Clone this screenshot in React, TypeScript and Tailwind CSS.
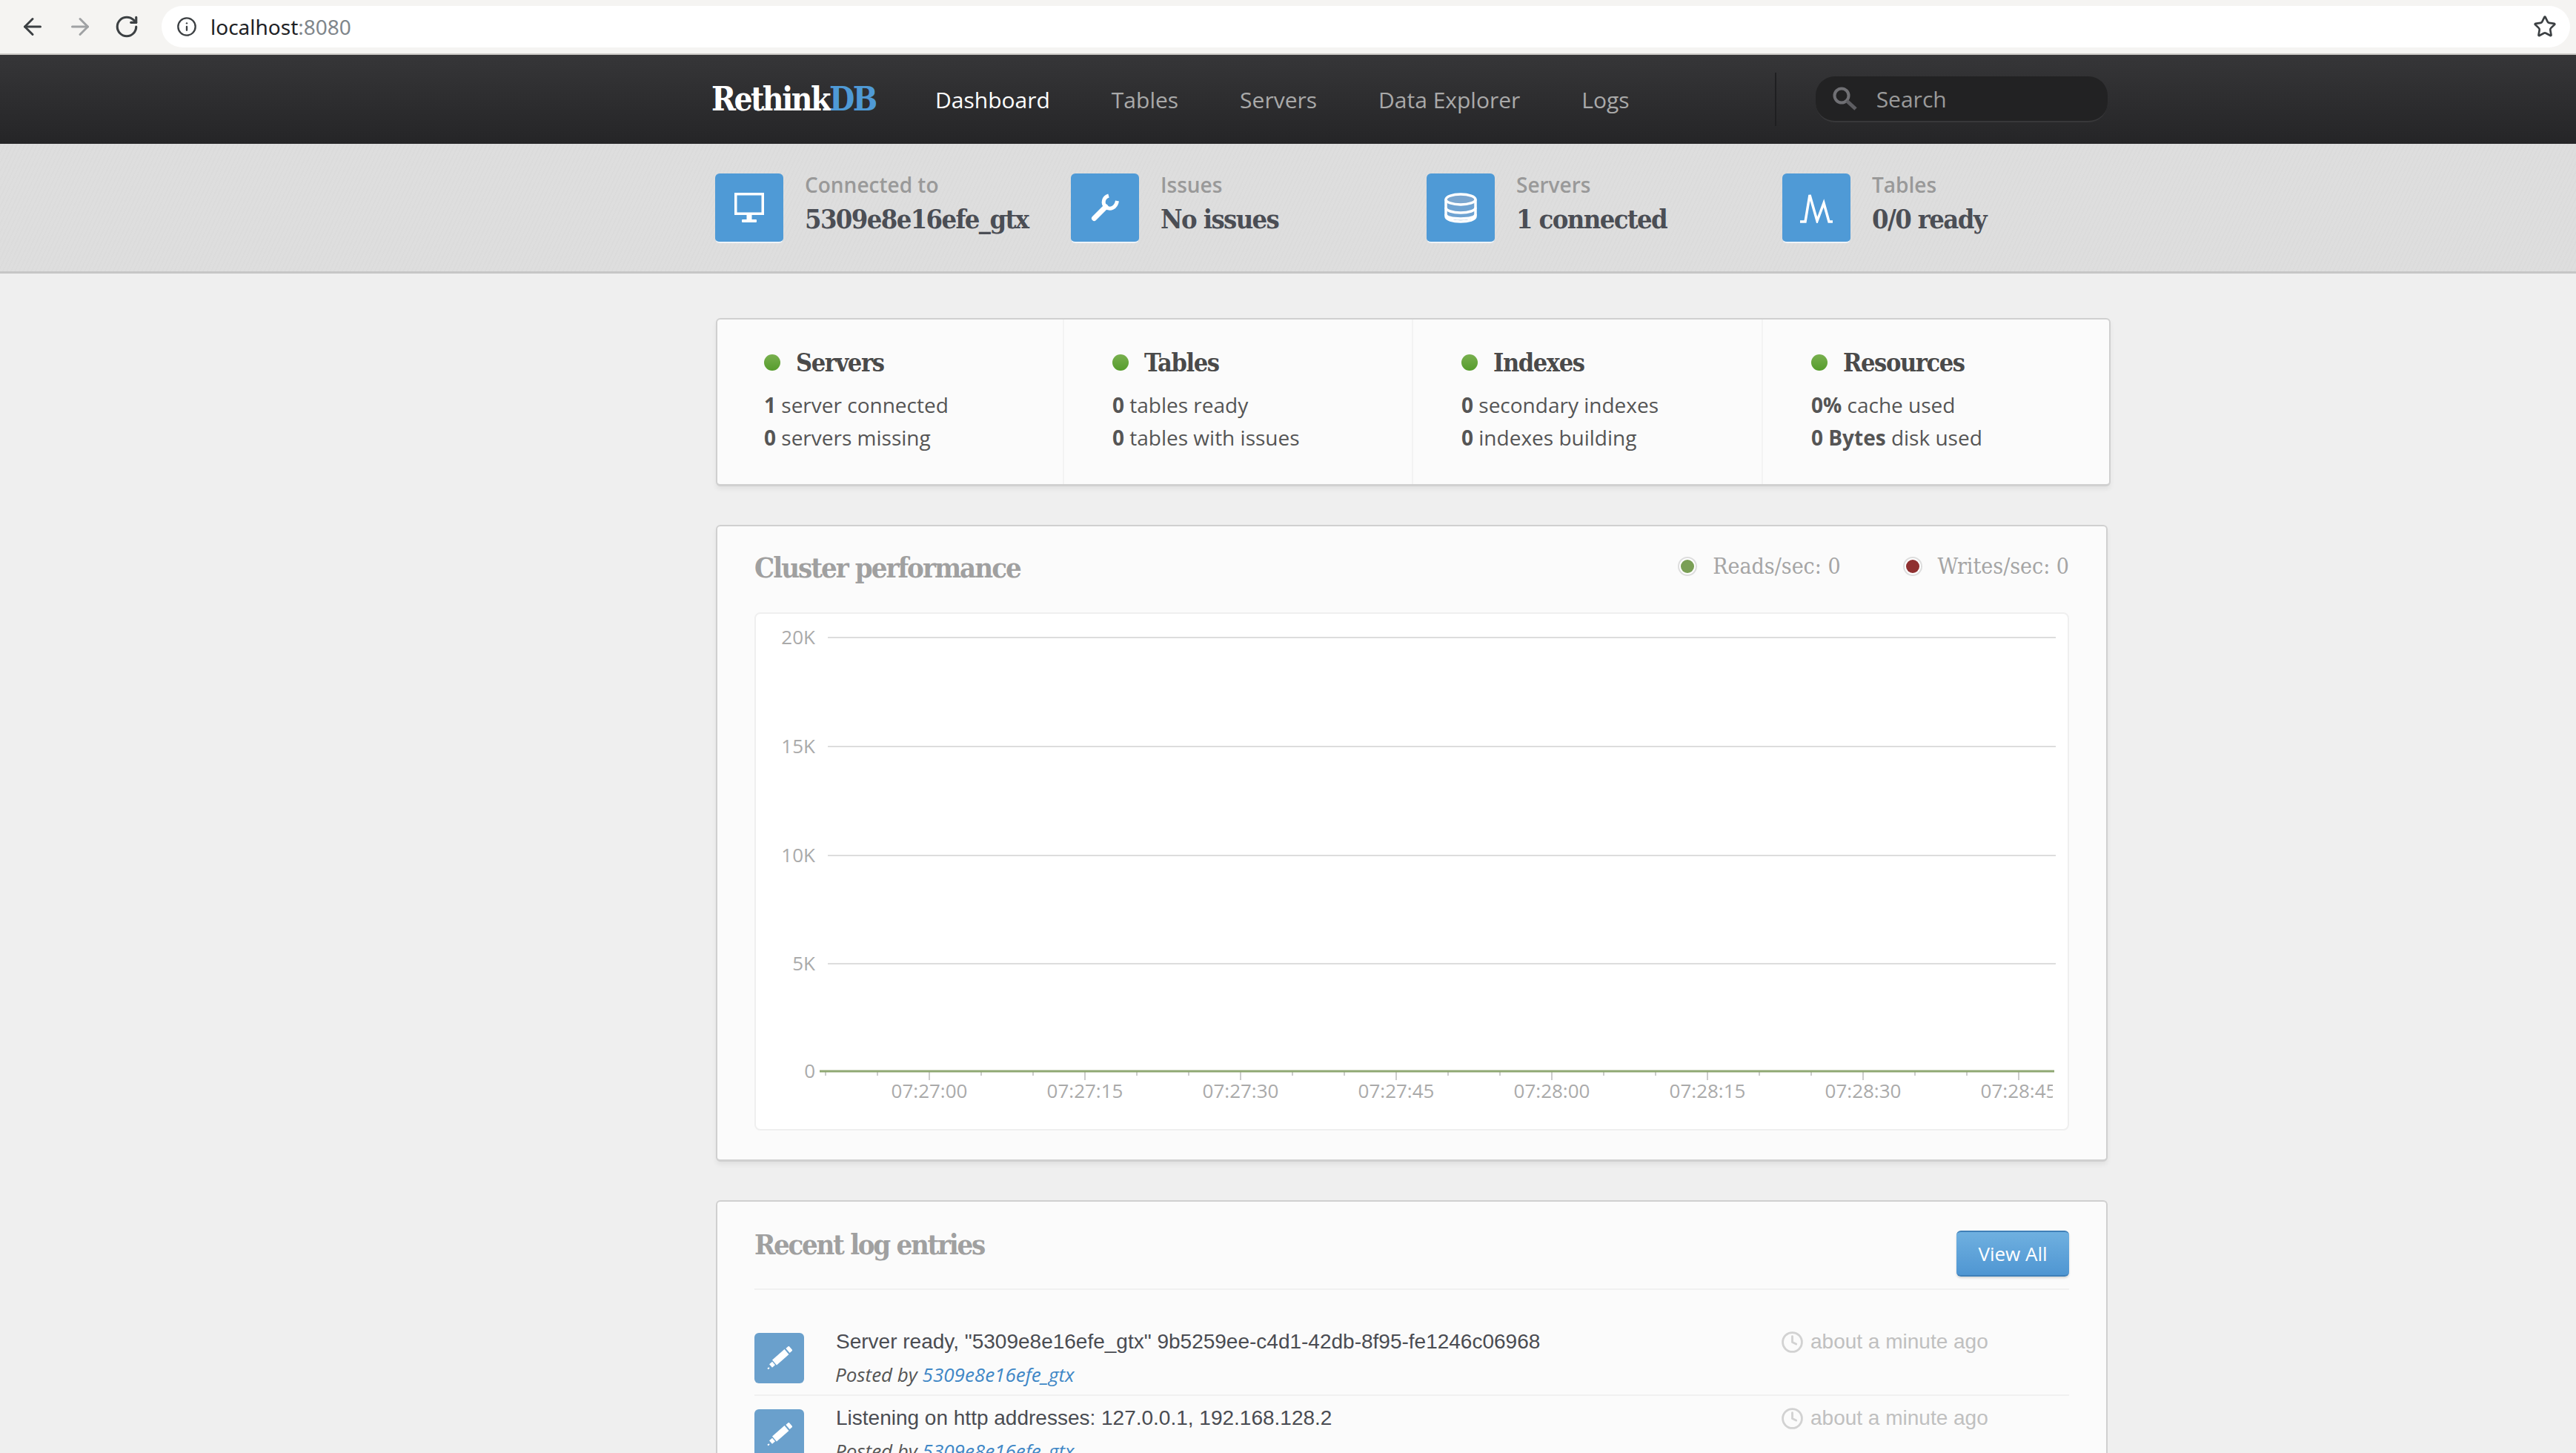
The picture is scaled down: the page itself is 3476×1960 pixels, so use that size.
import React from 'react';
import { ArrowLeft, ArrowRight, RotateCw, Info, Star, Clock } from 'lucide-react';

const sans = "[font-family:'Open_Sans',sans-serif]";
const slab = "[font-family:'DejaVu_Serif_Condensed','DejaVu_Serif',serif]";
const texture = 'bg-[repeating-linear-gradient(115deg,rgba(0,0,0,0.012)_0_2px,transparent_2px_5px)]';

function MonitorIcon() {
  return (
    <svg width="40" height="40" viewBox="0 0 40 40" fill="none">
      <rect x="1.75" y="1.75" width="36.5" height="26.5" stroke="#fff" strokeWidth="3.5" />
      <rect x="16.5" y="30" width="7" height="6" fill="#fff" />
      <rect x="10" y="36" width="20" height="4" rx="1" fill="#fff" />
    </svg>
  );
}

function WrenchIcon() {
  return (
    <svg width="38" height="38" viewBox="0 0 38 38" fill="none" stroke="#fff" strokeLinecap="round">
      <path d="M4.5 33.5L20 18" strokeWidth="7" />
      <path d="M24 3C17 5 15 13 20 18C26 23 34 19 35.5 10" strokeWidth="5" strokeLinecap="butt" />
    </svg>
  );
}

function DatabaseIcon() {
  return (
    <svg width="44" height="41" viewBox="0 0 44 41" fill="none" stroke="#fff" strokeWidth="3.5">
      <path d="M2 9V32C2 36 11 39 22 39S42 36 42 32V9" fill="#6fa3d2" />
      <path d="M2 20C2 24 11 27 22 27S42 24 42 20M2 29C2 33 11 35 22 35S42 33 42 29" />
      <ellipse cx="22" cy="9" rx="20" ry="7" fill="#7ba6cf" />
    </svg>
  );
}

function PeaksIcon() {
  return (
    <svg width="44" height="41" viewBox="0 0 44 41" fill="none">
      <path d="M0 39H7L13 3L23 38L32 14L39 39H44" stroke="#fff" strokeWidth="3.5" />
    </svg>
  );
}

function PencilIcon() {
  return (
    <svg width="34" height="32" viewBox="0 0 34 32" fill="none" stroke="#fff">
      <path d="M1 30.5L3 29" strokeWidth="2" />
      <path d="M5 26.5L9 23" strokeWidth="6" />
      <path d="M10 22L26.5 7.5" strokeWidth="9" />
      <path d="M28 6L32 2.5" strokeWidth="8" />
    </svg>
  );
}

function SearchIcon() {
  return (
    <svg width="34" height="32" viewBox="0 0 34 32" fill="none" className="shrink-0">
      <circle cx="12" cy="12" r="9.5" stroke="#707074" strokeWidth="4" />
      <path d="M19 19L31 30" stroke="#5e5e62" strokeWidth="5" />
    </svg>
  );
}

const statusItems = [
  { label: 'Connected to', value: '5309e8e16efe_gtx', icon: <MonitorIcon /> },
  { label: 'Issues', value: 'No issues', icon: <WrenchIcon /> },
  { label: 'Servers', value: '1 connected', icon: <DatabaseIcon /> },
  { label: 'Tables', value: '0/0 ready', icon: <PeaksIcon /> },
];

const summary = [
  {
    title: 'Servers',
    lines: [['1', ' server connected'], ['0', ' servers missing']],
  },
  {
    title: 'Tables',
    lines: [['0', ' tables ready'], ['0', ' tables with issues']],
  },
  {
    title: 'Indexes',
    lines: [['0', ' secondary indexes'], ['0', ' indexes building']],
  },
  {
    title: 'Resources',
    lines: [['0%', ' cache used'], ['0 Bytes', ' disk used']],
  },
];

const gridLines = [
  { y: 32, label: '20K' },
  { y: 179, label: '15K' },
  { y: 326, label: '10K' },
  { y: 472, label: '5K' },
];

const timeLabels = [
  { x: 234, label: '07:27:00' },
  { x: 444, label: '07:27:15' },
  { x: 654, label: '07:27:30' },
  { x: 864, label: '07:27:45' },
  { x: 1074, label: '07:28:00' },
  { x: 1284, label: '07:28:15' },
  { x: 1494, label: '07:28:30' },
  { x: 1704, label: '07:28:45' },
];

const ticks = Array.from({ length: 24 }, (_, i) => 94 + i * 70);

function Chart() {
  return (
    <svg width="1774" height="695" className="block">
      <defs>
        <clipPath id="plot">
          <rect x="0" y="0" width="1750" height="695" />
        </clipPath>
      </defs>
      <g fontFamily="'Open Sans', sans-serif" fontSize="26" fill="#aaaaaa">
        {gridLines.map((g) => (
          <g key={g.label}>
            <line x1="97" x2="1754" y1={g.y} y2={g.y} stroke="#dddddd" strokeWidth="2" />
            <text x="80" y={g.y + 9} textAnchor="end">{g.label}</text>
          </g>
        ))}
        <text x="80" y="626" textAnchor="end">0</text>
        {ticks.map((x, i) => (
          <line key={x} x1={x} x2={x} y1="618" y2={i % 3 === 2 ? 629 : 623} stroke="#cccccc" strokeWidth="2" />
        ))}
        <line x1="86" x2="1752" y1="617" y2="617" stroke="#8fa873" strokeWidth="3" />
        <g clipPath="url(#plot)">
          {timeLabels.map((t) => (
            <text key={t.label} x={t.x} y="653" textAnchor="middle">{t.label}</text>
          ))}
        </g>
      </g>
    </svg>
  );
}

function LogEntry({ text }: { text: string }) {
  return (
    <div className="flex h-[103px] border-b-2 border-[#f1f1f1] pt-[18px]">
      <div className="flex h-[68px] w-[67px] shrink-0 items-center justify-center rounded-[6px] bg-[#6aa0cc]">
        <PencilIcon />
      </div>
      <div className="ml-[43px] w-[1276px]">
        <div className="h-[24px] text-[28px] leading-[24px] text-[#4a4c52] [font-family:'Liberation_Sans',sans-serif]">{text}</div>
        <div className={`mt-[20px] -ml-[1px] text-[26px] leading-[24px] text-[#555555] italic ${sans}`}>
          Posted by <span className="text-[#3f87c6]">5309e8e16efe_gtx</span>
        </div>
      </div>
      <div className="-ml-[1px] flex h-[24px] items-center text-[28px] text-[#c0c0c0] [font-family:'Liberation_Sans',sans-serif]">
        <Clock className="h-[31px] w-[31px] text-[#d2d2d2]" strokeWidth={2.2} />
        <span className="ml-[9px]">about a minute ago</span>
      </div>
    </div>
  );
}

export default function App() {
  return (
    <div className={`h-[1960px] overflow-hidden bg-[#efefef] ${sans}`}>
      {/* browser toolbar */}
      <div className="flex h-[74px] items-center border-b-2 border-[#cdcbc7] bg-[#f5f4f2]">
        <div className="flex w-[218px] shrink-0 items-center pl-[26px] text-[#3c4043]">
          <ArrowLeft className="h-[36px] w-[36px]" strokeWidth={2} />
          <ArrowRight className="ml-[28px] h-[36px] w-[36px] text-[#a0a2a4]" strokeWidth={2} />
          <RotateCw className="ml-[28px] h-[34px] w-[34px]" strokeWidth={2.2} />
        </div>
        <div className="flex h-[56px] w-[3250px] items-center rounded-[28px] bg-white pl-[20px] pr-[18px]">
          <Info className="h-[28px] w-[28px] text-[#3c4043]" strokeWidth={2} />
          <span className="ml-[18px] text-[28px] text-[#202124] [font-family:'Noto_Sans',sans-serif]">
            localhost<span className="text-[#80868b]">:8080</span>
          </span>
          <Star className="ml-auto h-[32px] w-[32px] text-[#3c4043]" strokeWidth={2} />
        </div>
      </div>

      {/* navbar */}
      <div className="flex h-[120px] items-center bg-gradient-to-b from-[#363638] to-[#252527] pl-[960px]">
        <div className={`w-[302px] text-[44px] leading-none font-bold tracking-[-2.5px] ${slab}`}>
          <span className="text-white">Rethink</span>
          <span className="text-[#4f9ad6]">DB</span>
        </div>
        <div className="flex gap-[83px] text-[30px] text-[#a9a9a9]">
          <span className="text-white">Dashboard</span>
          <span>Tables</span>
          <span>Servers</span>
          <span>Data Explorer</span>
          <span>Logs</span>
        </div>
        <div className="ml-[196px] h-[72px] w-[2px] bg-[#1f1f21]" />
        <div className="ml-[53px] flex h-[62px] w-[394px] items-center rounded-[26px] border-b-2 border-[#38383a] bg-[#222223] pl-[23px]">
          <SearchIcon />
          <span className="ml-[25px] text-[30px] text-[#9a9a9a]">Search</span>
        </div>
      </div>

      {/* status bar */}
      <div className={`flex h-[175px] border-b-[3px] border-[#c6c6c6] bg-[#dedede] pt-[40px] pl-[965px] ${texture}`}>
        {statusItems.map((item) => (
          <div key={item.label} className="flex w-[480px] shrink-0">
            <div className="flex h-[94px] w-[92px] shrink-0 items-center justify-center rounded-[6px] border-b-2 border-[#f0f4f8] bg-[#4f9ad6]">
              {item.icon}
            </div>
            <div className="ml-[29px]">
              <div className="-mt-[3px] text-[28px] leading-[36px] font-semibold text-[#999999]">{item.label}</div>
              <div className={`mt-[6px] text-[36px] leading-[44px] font-bold tracking-[-1.6px] whitespace-nowrap text-[#4b4e55] ${slab}`}>{item.value}</div>
            </div>
          </div>
        ))}
      </div>

      <div className="ml-[966px] w-[1882px]">
        {/* summary */}
        <div className="mt-[60px] grid h-[227px] grid-cols-[468px_471px_472px_1fr] rounded-[6px] border-x-2 border-t-2 border-b-[3px] border-[#d0d0d0] bg-[#fbfbfb] shadow-[0_4px_6px_rgba(0,0,0,0.06)]">
          {summary.map((col, i) => (
            <div key={col.title} className={`pt-[36px] ${i === 0 ? 'pl-[63px]' : 'pl-[65px]'} ${i < 3 ? 'border-r-2 border-[#f3f3f3]' : ''}`}>
              <div className="flex h-[44px] items-center">
                <span className="h-[22px] w-[22px] rounded-full bg-gradient-to-b from-[#78b04e] to-[#569c2c]" />
                <span className={`ml-[21px] text-[34px] font-bold tracking-[-1.4px] text-[#4a4a4a] ${slab}`}>{col.title}</span>
              </div>
              <div className="mt-[13px] text-[28px] leading-[44px] text-[#555555]">
                {col.lines.map((l) => (
                  <div key={l[1]}>
                    <b className="font-bold">{l[0]}</b>
                    {l[1]}
                  </div>
                ))}
              </div>
            </div>
          ))}
        </div>

        {/* cluster performance */}
        <div className="mt-[52px] h-[859px] w-[1878px] rounded-[6px] border-x-2 border-t-2 border-b-[3px] border-[#d0d0d0] bg-[#fbfbfb] px-[50px] shadow-[0_4px_6px_rgba(0,0,0,0.06)]">
          <div className="flex h-[116px] items-center justify-between pb-[6px]">
            <div className={`text-[38px] font-bold tracking-[-2px] text-[#a0a0a0] ${slab}`}>Cluster performance</div>
            <div className={`mb-[3px] flex items-center text-[30px] text-[#a5a5a5] ${slab}`}>
              <span className="flex h-[26px] w-[26px] items-center justify-center rounded-full border-2 border-[#dddddd] bg-white">
                <span className="h-[18px] w-[18px] rounded-full bg-[#7a9f55]" />
              </span>
              <span className="ml-[21px]">Reads/sec: 0</span>
              <span className="ml-[84px] flex h-[26px] w-[26px] items-center justify-center rounded-full border-2 border-[#dddddd] bg-white">
                <span className="h-[18px] w-[18px] rounded-full bg-[#8f3030]" />
              </span>
              <span className="ml-[21px]">Writes/sec: 0</span>
            </div>
          </div>
          <div className="h-[699px] rounded-[8px] border-2 border-[#efefef] bg-white">
            <Chart />
          </div>
        </div>

        {/* log entries */}
        <div className="mt-[52px] h-[400px] w-[1878px] rounded-[6px] border-x-2 border-t-2 border-[#d0d0d0] bg-[#fbfbfb] px-[50px]">
          <div className="flex h-[119px] items-start justify-between border-b-2 border-[#f1f1f1]">
            <div className={`mt-[29px] text-[38px] leading-[57px] font-bold tracking-[-2.3px] text-[#a0a0a0] ${slab}`}>Recent log entries</div>
            <div className="mt-[39px] flex h-[62px] w-[152px] items-center justify-center rounded-[6px] border-t-2 border-b-2 border-[#3f80b8] bg-gradient-to-b from-[#6fb0e0] to-[#4f96d2] text-[26px] text-white shadow-[0_2px_3px_rgba(0,0,0,0.15)]">
              View All
            </div>
          </div>
          <div className="pt-[40px]">
            <LogEntry text={'Server ready, "5309e8e16efe_gtx" 9b5259ee-c4d1-42db-8f95-fe1246c06968'} />
            <LogEntry text="Listening on http addresses: 127.0.0.1, 192.168.128.2" />
          </div>
        </div>
      </div>
    </div>
  );
}
